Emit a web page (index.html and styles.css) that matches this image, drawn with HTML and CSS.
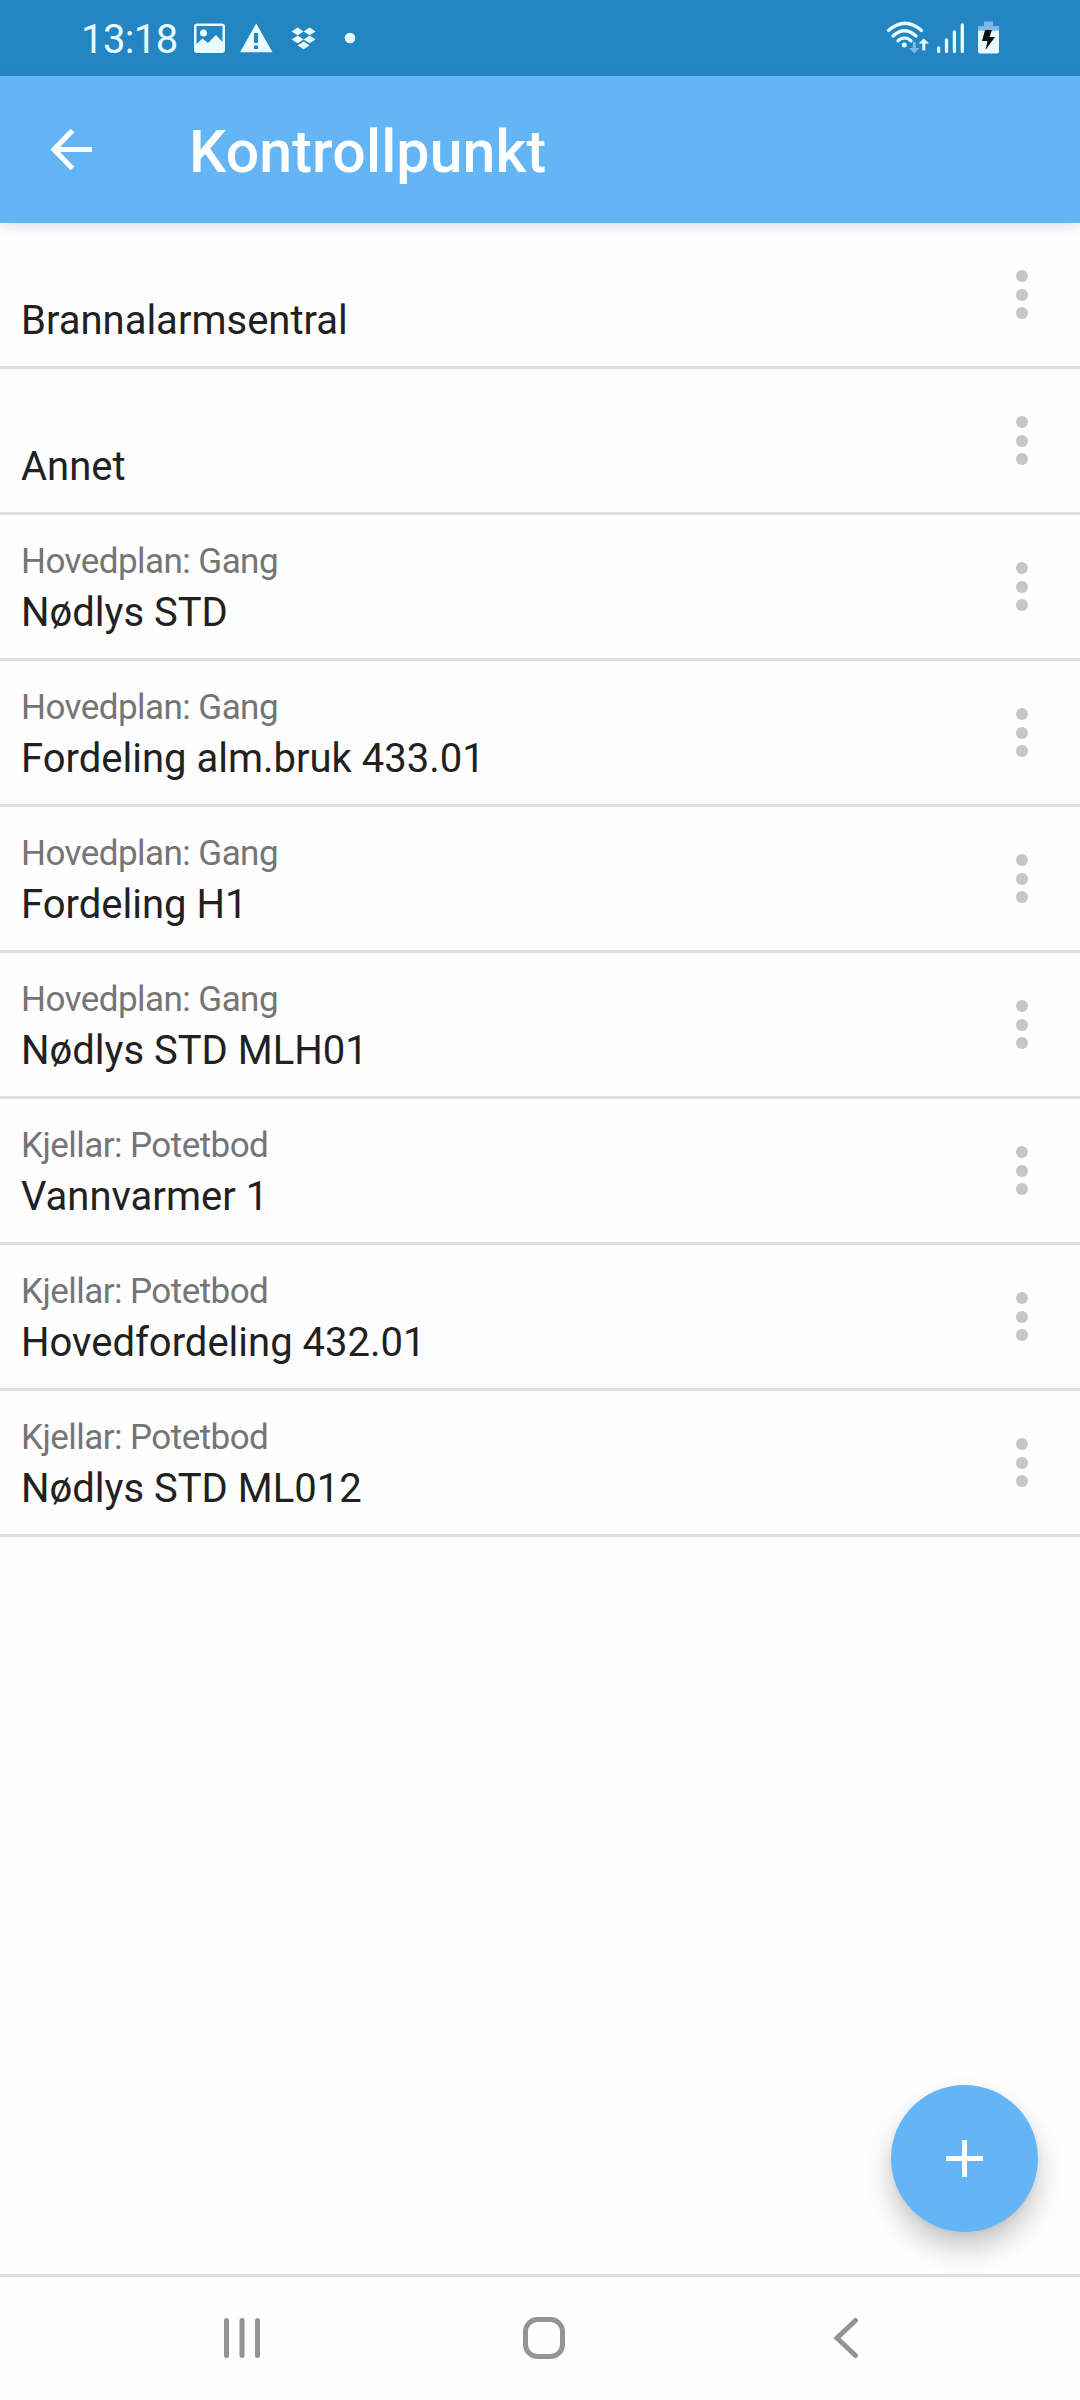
FILE: index.html
```
<!DOCTYPE html>
<html lang="no">
<head>
  <meta charset="utf-8">
  <title>Kontrollpunkt</title>
  <link rel="stylesheet" href="styles.css">
</head>
<body>
  <div class="status-bar">
    <span class="clock">13:18</span>
    <svg class="status-left" width="170" height="76" viewBox="190 0 170 76">
      <path fill-rule="evenodd" d="M197 23.500h25a3 3 0 0 1 3 3v23.500a3 3 0 0 1-3 3h-25a3 3 0 0 1-3-3v-23.500a3 3 0 0 1 3-3zM196.500 26v18l6-5.500 5.500 4.500 8-8 6.500 7v-16z"/>
      <circle cx="203.500" cy="33" r="3.500"/>
      <path fill-rule="evenodd" d="M256.200 23.500l16.300 28.700h-32.500zM254 33v10h4v-10zM254 45.500v3.500h4v-3.500z"/>
      <path d="M297.600 27.600l6 3.800-6 3.800-6-3.800zM309.600 27.600l6 3.800-6 3.800-6-3.800zM297.600 35.600l6 3.800-6 3.800-6-3.800zM309.600 35.600l6 3.800-6 3.800-6-3.800zM303.600 41.600l6 3.800-6 3.800-6-3.800z"/>
      <circle cx="350" cy="38" r="5.300"/>
    </svg>
    <svg class="status-right" width="120" height="76" viewBox="880 0 120 76">
      <g class="wifi">
        <path d="M888.500 30.500q16.500-14.500 33 0M893 36q11.500-10.500 23 0M898 40.800q6.500-5.800 13 0"/>
      </g>
      <circle cx="904.300" cy="45" r="2.500"/>
      <path class="faded" d="M912.800 42h3v6h3.700l-5.200 5.500-5.200-5.500h3.700z"/>
      <path d="M922.300 50.500v-7h-3.700l5.200-5 5.200 5h-3.700v7z"/>
      <g class="signal">
        <path d="M938.700 48v3.500M946.500 40v11.500M954.400 32v19.500M962.300 25v26.500"/>
      </g>
      <path class="faded" d="M984 21.500h9v4.500h6v4.500h-21v-4.500h6z"/>
      <path d="M978 30.500h21v21a2 2 0 0 1-2 2h-17a2 2 0 0 1-2-2z"/>
      <path class="bolt" d="M985 30h7l-2.500 7h5.500l-9.500 13 2-9h-5.500z"/>
    </svg>
  </div>

  <div class="toolbar">
    <svg class="back" width="44" height="44" viewBox="0 0 44 44">
      <path d="M42 21.500H5M22.500 2.500L4 21.500l18.500 19"/>
    </svg>
    <h1>Kontrollpunkt</h1>
  </div>

  <div class="list">
    <div class="row">
      <div class="text"><div class="place"></div><div class="name">Brannalarmsentral</div></div>
      <div class="menu"><i></i><i></i><i></i></div>
    </div>
    <div class="row">
      <div class="text"><div class="place"></div><div class="name">Annet</div></div>
      <div class="menu"><i></i><i></i><i></i></div>
    </div>
    <div class="row">
      <div class="text"><div class="place">Hovedplan: Gang</div><div class="name">Nødlys STD</div></div>
      <div class="menu"><i></i><i></i><i></i></div>
    </div>
    <div class="row">
      <div class="text"><div class="place">Hovedplan: Gang</div><div class="name">Fordeling alm.bruk 433.01</div></div>
      <div class="menu"><i></i><i></i><i></i></div>
    </div>
    <div class="row">
      <div class="text"><div class="place">Hovedplan: Gang</div><div class="name">Fordeling H1</div></div>
      <div class="menu"><i></i><i></i><i></i></div>
    </div>
    <div class="row">
      <div class="text"><div class="place">Hovedplan: Gang</div><div class="name">Nødlys STD MLH01</div></div>
      <div class="menu"><i></i><i></i><i></i></div>
    </div>
    <div class="row">
      <div class="text"><div class="place">Kjellar: Potetbod</div><div class="name">Vannvarmer 1</div></div>
      <div class="menu"><i></i><i></i><i></i></div>
    </div>
    <div class="row">
      <div class="text"><div class="place">Kjellar: Potetbod</div><div class="name">Hovedfordeling 432.01</div></div>
      <div class="menu"><i></i><i></i><i></i></div>
    </div>
    <div class="row">
      <div class="text"><div class="place">Kjellar: Potetbod</div><div class="name">Nødlys STD ML012</div></div>
      <div class="menu"><i></i><i></i><i></i></div>
    </div>
  </div>

  <button class="add-button" aria-label="Legg til">
    <svg width="37" height="37" viewBox="0 0 37 37">
      <path d="M18.500 0v37M0 18.500h37"/>
    </svg>
  </button>

  <div class="nav-bar">
    <svg width="38" height="44" viewBox="0 0 38 44">
      <path d="M3.500 4.500v35M19 4.500v35M34.500 4.500v35"/>
    </svg>
    <svg class="home" width="44" height="44" viewBox="0 0 44 44">
      <rect x="3.500" y="3.500" width="37" height="37" rx="12"/>
    </svg>
    <svg width="26" height="44" viewBox="0 0 26 44">
      <path d="M22.500 4.500L4 22l18.500 17.500"/>
    </svg>
  </div>
</body>
</html>
```

FILE: styles.css
```
* {
  box-sizing: border-box;
}

body {
  margin: 0;
  height: 2400px;
  display: flex;
  flex-direction: column;
  background-color: #fefefe;
  color: #212121;
  font-family: Roboto, sans-serif;
  overflow: hidden;
}

svg {
  display: block;
  flex: none;
}

.status-bar {
  display: flex;
  align-items: center;
  height: 76px;
  padding: 0 80px 0 81px;
  background-color: #2386c3;
  color: #e9fbff;
  fill: #e9fbff;
}

.clock {
  width: 109px;
  padding-top: 3px;
  font-size: 40px;
  line-height: 73px;
  letter-spacing: -0.6px;
  white-space: nowrap;
}

.status-right {
  margin-left: auto;
}

.wifi,
.signal {
  fill: none;
  stroke: #e9fbff;
  stroke-width: 3.300;
  stroke-linecap: round;
}

.faded {
  fill: #7db9e3;
}

.bolt {
  fill: #111;
}

.toolbar {
  display: flex;
  align-items: center;
  height: 147px;
  padding: 0 50px;
  background-color: #64b5f6;
  box-shadow: 0 2px 12px rgba(60, 110, 150, 0.25);
}

.back {
  fill: none;
  stroke: #fff;
  stroke-width: 5.200;
}

h1 {
  margin: 4px 0 0 95px;
  color: #fff;
  font-size: 59px;
  font-weight: 500;
  line-height: 68px;
  letter-spacing: 0.15px;
}

.list {
  flex: 1;
}

.row {
  display: flex;
  justify-content: space-between;
  align-items: center;
  height: 146px;
  padding: 0 52px 0 21px;
  border-bottom: 3px solid #e0e0e0;
}

.text {
  padding-top: 6px;
}

.place {
  height: 47px;
  color: #757575;
  font-size: 35px;
  line-height: 46px;
  letter-spacing: -0.55px;
}

.name {
  font-size: 40px;
  line-height: 54px;
}

.menu {
  display: flex;
  flex-direction: column;
  gap: 6.500px;
}

.menu i {
  width: 12px;
  height: 12px;
  border-radius: 50%;
  background-color: #c6c6c6;
}

/* floats over the list */
.add-button {
  position: absolute;
  right: 42px;
  bottom: 168px;
  display: flex;
  align-items: center;
  justify-content: center;
  width: 147px;
  height: 147px;
  padding: 0;
  border: none;
  border-radius: 50%;
  background-color: #64b5f6;
  box-shadow: 0 16px 28px rgba(0, 0, 0, 0.22), 0 2px 6px rgba(0, 0, 0, 0.06);
}

.add-button svg {
  stroke: #fff;
  stroke-width: 5;
}

.nav-bar {
  display: flex;
  align-items: center;
  justify-content: space-between;
  height: 126px;
  padding: 0 221px 1px 223px;
  border-top: 3px solid #e0e0e0;
  fill: none;
  stroke: #949494;
  stroke-width: 5;
  stroke-linecap: round;
}

.home {
  margin-right: 6px;
}
```
